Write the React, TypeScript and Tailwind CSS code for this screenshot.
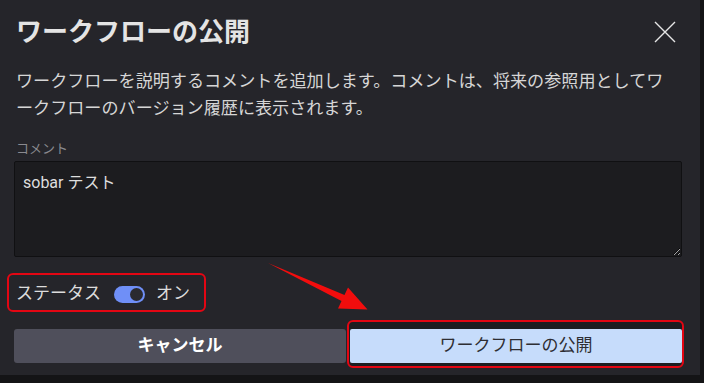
import React from "react";

const font = {
  fontFamily: "Roboto, 'Noto Sans CJK JP', sans-serif",
};

const CloseIcon = () => (
  <svg width="22" height="22" viewBox="0 0 22 22" className="text-[#e6e6e6]">
    <path d="M1 1L21 21M21 1L1 21" stroke="currentColor" strokeWidth="1.4" />
  </svg>
);

const Toggle = ({ on }: { on: boolean }) => (
  <div className="relative h-[17px] w-[31px] rounded-full bg-[#6f8ff7]">
    <div
      className={
        on
          ? "absolute right-[2px] top-[2px] h-[13px] w-[13px] rounded-full bg-[#2a2a30]"
          : "absolute left-[2px] top-[2px] h-[13px] w-[13px] rounded-full bg-[#2a2a30]"
      }
    />
  </div>
);

const App = () => {
  return (
    <div
      className="relative h-[383px] w-[704px] overflow-hidden bg-[#141416]"
      style={font}
    >
      <div className="h-[375px] w-[700px] bg-[#25252a] pl-[14px] pr-[18px] pt-[17px]">
        <div className="flex h-[30px] items-center justify-between pl-[2px] pr-[6px]">
          <h1 className="text-[26px] font-semibold leading-[30px] text-[#e4e4e4]">
            ワークフローの公開
          </h1>
          <CloseIcon />
        </div>

        <p className="mt-[21px] pl-[2px] text-[17.1px] leading-[27px] text-[#d6d6d6]">
          ワークフローを説明するコメントを追加します。コメントは、将来の参照用としてワ
          <br />
          ークフローのバージョン履歴に表示されます。
        </p>

        <label className="mt-[19px] block pl-[2px] text-[13px] leading-[16px] text-[#8a8a8f]">
          コメント
        </label>
        <textarea
          readOnly
          defaultValue="sobar テスト"
          className="mt-[4px] block h-[96px] w-full resize-y rounded-[2px] border border-[#101012] bg-[#1c1c1f] px-[8px] pt-[11px] text-[16px] leading-[20px] text-[#dedede] outline-none"
        />

        <div className="mt-[25px] flex h-[24px] items-center gap-[13px] pl-[2px] text-[17px] text-[#dcdcdc]">
          <span>ステータス</span>
          <Toggle on />
          <span className="-ml-[2px]">オン</span>
        </div>

        <div className="relative mt-[23px] grid grid-cols-2 gap-[4px]">
          <button className="h-[34px] rounded-[3px] bg-[#4f4f5b] text-[17px] font-bold text-white">
            キャンセル
          </button>
          <div className="relative">
            <div className="absolute -left-[3px] -right-[2px] -top-[9px] -bottom-[5px] rounded-[6px] border-2 border-[#e30613] bg-[#1d1d21]" />
            <button className="relative h-[34px] w-full rounded-[2px] bg-[#c6dcfb] text-[17px] text-[#2e2e33]">
              ワークフローの公開
            </button>
          </div>
        </div>
      </div>

      {/* annotation: red outline around status */}
      <div className="absolute left-[7px] top-[273px] h-[39px] w-[199px] rounded-[6px] border-2 border-[#e30613]" />

      {/* annotation: red arrow */}
      <svg
        className="absolute left-0 top-0"
        width="704"
        height="383"
        viewBox="0 0 704 383"
      >
        <polygon
          points="268,263 344.5,295 348,287.5 367.5,309.5 338,308.5 341.5,301"
          fill="#f20d0d"
        />
      </svg>
    </div>
  );
};

export default App;
